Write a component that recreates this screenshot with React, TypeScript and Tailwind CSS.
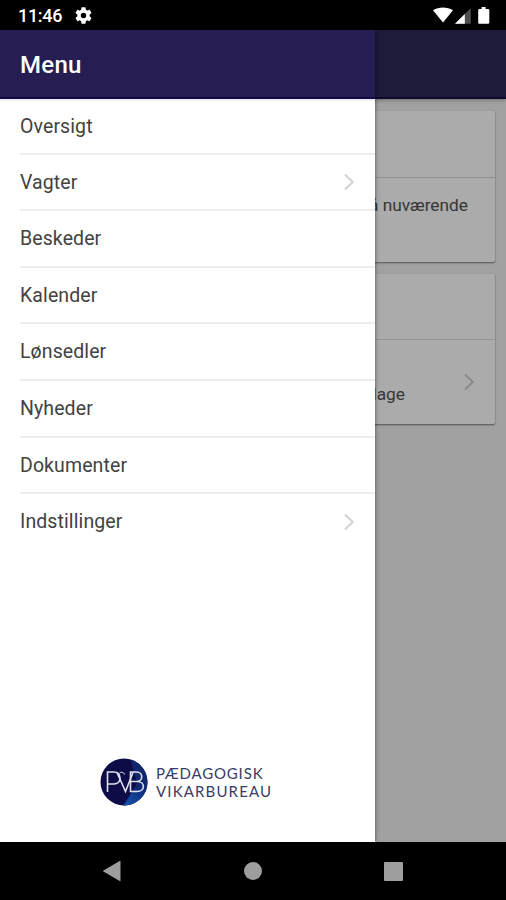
import { clsx } from "clsx";

type MenuItem = {
  label: string;
  hasChildren?: boolean;
};

const menuItems: MenuItem[] = [
  { label: "Oversigt" },
  { label: "Vagter", hasChildren: true },
  { label: "Beskeder" },
  { label: "Kalender" },
  { label: "Lønsedler" },
  { label: "Nyheder" },
  { label: "Dokumenter" },
  { label: "Indstillinger", hasChildren: true },
];

export default function App() {
  return (
    <div className="flex h-[900px] w-[506px] flex-col overflow-hidden bg-black font-[Roboto,sans-serif]">
      <StatusBar />
      <div className="relative h-[812px] shrink-0 overflow-hidden">
        <Dashboard />
        {/* scrim between the dashboard and the open drawer */}
        <div aria-hidden className="absolute inset-0 bg-black/32" />
        <Drawer />
      </div>
      <SystemNav />
    </div>
  );
}

function StatusBar() {
  return (
    <div className="flex h-[30px] shrink-0 items-center justify-between bg-black pr-[16px] pl-[18px] text-white">
      <div className="flex items-center gap-[13px]">
        <span className="pt-px text-[18px] leading-[30px] font-medium tracking-[-0.3px]">
          11:46
        </span>
        <svg viewBox="2 2 20 20" className="size-[17px] fill-current">
          <path d="M19.14 12.94c.04-.3.06-.61.06-.94 0-.32-.02-.64-.07-.94l2.03-1.58a.49.49 0 0 0 .12-.61l-1.92-3.32a.488.488 0 0 0-.59-.22l-2.39.96c-.5-.38-1.03-.7-1.62-.94l-.36-2.54a.484.484 0 0 0-.48-.41h-3.84c-.24 0-.43.17-.47.41l-.36 2.54c-.59.24-1.13.57-1.62.94l-2.39-.96c-.22-.08-.47 0-.59.22L2.74 8.87c-.12.21-.08.47.12.61l2.03 1.58c-.05.3-.09.63-.09.94s.02.64.07.94l-2.03 1.58a.49.49 0 0 0-.12.61l1.92 3.32c.12.22.37.29.59.22l2.39-.96c.5.38 1.03.7 1.62.94l.36 2.54c.05.24.24.41.48.41h3.84c.24 0 .44-.17.47-.41l.36-2.54c.59-.24 1.13-.56 1.62-.94l2.39.96c.22.08.47 0 .59-.22l1.92-3.32c.12-.22.07-.47-.12-.61l-2.01-1.58zM12 15.2a3.2 3.2 0 1 1 0-6.4 3.2 3.2 0 0 1 0 6.4z" />
        </svg>
      </div>
      <svg viewBox="0 0 57 17" className="h-[17px] w-[57px] fill-current">
        <path d="M0 3.2C5.8-.5 14.2-.5 20 3.2L10 15.6z" />
        <path d="M37.8 1v15.8H22z" fillOpacity="0.3" />
        <path d="M31.8 7v9.8H22z" />
        <path d="M48.6 0h4v2h2.2c.9 0 1.5.6 1.5 1.4v12c0 .8-.6 1.4-1.5 1.4h-8.2c-.8 0-1.4-.6-1.4-1.4v-12c0-.8.6-1.4 1.4-1.4h2z" />
      </svg>
    </div>
  );
}

function Dashboard() {
  return (
    <div className="flex h-full flex-col bg-[#eeeeee] text-[#505050]">
      <div className="z-0 h-[69px] shrink-0 border-b-2 border-[#171045] bg-[#2c2756] shadow-[0_1px_4px_rgba(0,0,0,0.35)]" />
      <div className="flex flex-col gap-[12px] px-[11px] pt-[12px]">
        <section className="h-[151px] rounded-[2px] bg-[#fdfdfd] shadow-[0_1px_2px_rgba(0,0,0,0.5)]">
          <div className="h-[67px] border-b border-[#d2d2d2]" />
          <p className="pt-[15px] pr-[27px] text-right text-[17.3px] leading-[24px]">
            å nuværende
          </p>
        </section>
        <section className="h-[150px] rounded-[2px] bg-[#fdfdfd] shadow-[0_1px_2px_rgba(0,0,0,0.5)]">
          <div className="h-[66px] border-b border-[#dedede]" />
          <div className="flex h-[84px] items-center justify-end pr-[20px]">
            <p className="pt-[24px] text-[17.3px] leading-[24px]">lage</p>
            <Chevron className="ml-[58px] text-[#cdcdcd]" />
          </div>
        </section>
      </div>
    </div>
  );
}

function Drawer() {
  return (
    <aside className="absolute inset-y-0 left-0 flex w-[375px] flex-col bg-white shadow-[0_0_4px_rgba(0,0,0,0.55)]">
      <header className="flex h-[69px] shrink-0 items-center border-b-2 border-[#120a48] bg-[#261e53] pt-[3px] pl-[20px]">
        <h1 className="text-[24px] leading-none font-medium tracking-[0.3px] text-white">
          Menu
        </h1>
      </header>
      <ul className="flex flex-col border-t-2 border-[#eeecf4] text-[#424242]">
        {menuItems.map((item, i) => (
          <li
            key={item.label}
            className={clsx(
              "ml-[20px] flex items-center justify-between pr-[20px]",
              i === 0 ? "h-[53.6px]" : "h-[56.6px]",
              i < menuItems.length - 1 && "border-b-2 border-[#ededed]",
            )}
          >
            <span
              className={clsx(
                "text-[19.5px] leading-[24px] tracking-[0.1px]",
                i > 0 && i < menuItems.length - 1 && "pt-[1.6px]",
              )}
            >
              {item.label}
            </span>
            {item.hasChildren && <Chevron className="text-[#d3d3d3]" />}
          </li>
        ))}
      </ul>
      <Logo />
    </aside>
  );
}

function Chevron({ className }: { className?: string }) {
  return (
    <svg
      viewBox="0 0 12 18"
      className={clsx("h-[18px] w-[12px] fill-none stroke-current", className)}
      strokeWidth="2"
    >
      <path d="M2 1.5 9.8 9 2 16.5" />
    </svg>
  );
}

function Logo() {
  return (
    <div className="mt-auto mb-[36px] ml-[100px] flex items-center gap-[8px]">
      <svg viewBox="0 0 48 48" className="size-[48px]">
        <defs>
          <clipPath id="badge">
            <circle cx="24" cy="24" r="23.5" />
          </clipPath>
          <linearGradient id="facet" x1="0" y1="1" x2="1" y2="0">
            <stop offset="0" stopColor="#1450ad" />
            <stop offset="1" stopColor="#0e2c78" />
          </linearGradient>
        </defs>
        <g clipPath="url(#badge)">
          <path d="M0 0h48v48H0z" fill="#0d0c46" />
          <path d="M24 48 37 25 30 0h18v48z" fill="#12286c" />
          <path d="M23 48 34 31h14v17z" fill="url(#facet)" />
        </g>
        {/* PVB monogram, the strokes overlap each other */}
        <g fill="none" stroke="#dfe1ef" strokeWidth="1.6">
          <path d="M7.5 34V14h6.500c8 0 8 12 0 12H7.500" />
          <path d="M17 14.500 25.500 33.500 33 14.500" />
          <path d="M30.500 14h6c7 0 7 9.500 0 9.500h-6zM30.500 23.500H37c8.500 0 8.500 10 0 10h-6.500z" />
          <path d="M19 15.500c1.500-2 5-1.500 5.500 1" strokeWidth="1" />
        </g>
      </svg>
      <div className="flex flex-col font-[Lato,sans-serif] text-[15px] leading-[18px] whitespace-nowrap text-[#3b3b66]">
        <p className="tracking-[0.85px]">PÆDAGOGISK</p>
        <p className="tracking-[1.15px]">VIKARBUREAU</p>
      </div>
    </div>
  );
}

function SystemNav() {
  return (
    <nav className="flex h-[58px] shrink-0 items-center bg-black pl-[102px] text-[#9e9e9e]">
      <svg viewBox="0 0 20 22" className="h-[22px] w-[20px] fill-current">
        <path d="M18.500 1.300v19.400q0 .8-.8.400L1.400 11.500q-.7-.5 0-1L17.700.9q.8-.4.800.4z" />
      </svg>
      <div className="ml-[122px] size-[18px] rounded-full bg-current" />
      <div className="ml-[122px] size-[19px] rounded-[1px] bg-current" />
    </nav>
  );
}
